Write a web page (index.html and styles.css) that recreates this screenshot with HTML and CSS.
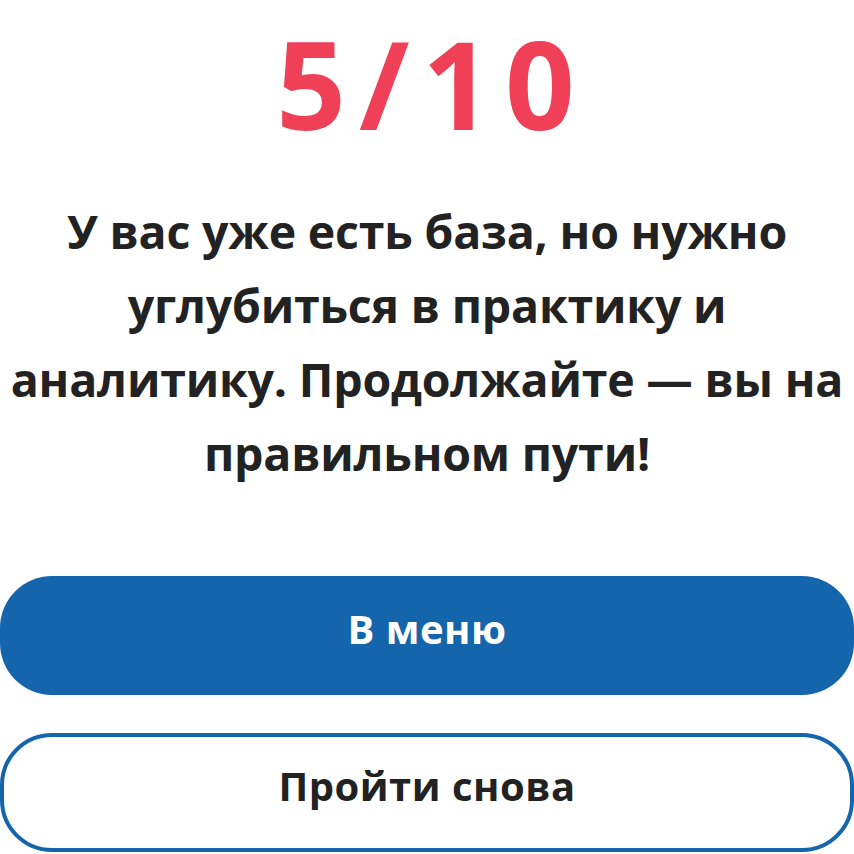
FILE: index.html
```html
<!DOCTYPE html>
<html lang="ru">
<head>
<meta charset="utf-8">
<link rel="stylesheet" href="styles.css">
</head>
<body>
<main class="result">
  <h1 class="score">5/10</h1>
  <p class="message">У вас уже есть база, но нужно углубиться в практику и аналитику. Продолжайте — вы на правильном пути!</p>
  <div class="actions">
    <button class="btn btn-primary">В меню</button>
    <button class="btn btn-outline">Пройти снова</button>
  </div>
</main>
</body>
</html>
```
FILE: styles.css
```css
html, body {
  margin: 0;
  padding: 0;
  background: #ffffff;
}
body {
  font-family: "Open Sans", "Noto Sans", sans-serif;
  color: #222222;
}
.result {
  display: flex;
  flex-direction: column;
  align-items: stretch;
  width: 854px;
}
.score {
  margin: 0;
  padding-top: 10px;
  text-align: center;
  font-size: 122px;
  line-height: 146px;
  font-weight: 700;
  color: #ef4058;
  letter-spacing: 13px;
  text-indent: 10px;
}
.message {
  margin: 38px 0 0;
  text-align: center;
  font-size: 46.5px;
  line-height: 74px;
  font-weight: 700;
  letter-spacing: -0.2px;
}
.actions {
  display: flex;
  flex-direction: column;
  gap: 38px;
  margin-top: 86px;
}
.btn {
  height: 119px;
  border-radius: 52px;
  font-family: "Open Sans", "Noto Sans", sans-serif;
  font-size: 40px;
  font-weight: 700;
  letter-spacing: 0.5px;
  width: 100%;
  padding: 0 0 15px;
  cursor: pointer;
}
.btn-primary {
  background: #1565ac;
  color: #ffffff;
  border: none;
}
.btn-outline {
  background: #ffffff;
  color: #222222;
  border: 4px solid #1565ac;
}
```
